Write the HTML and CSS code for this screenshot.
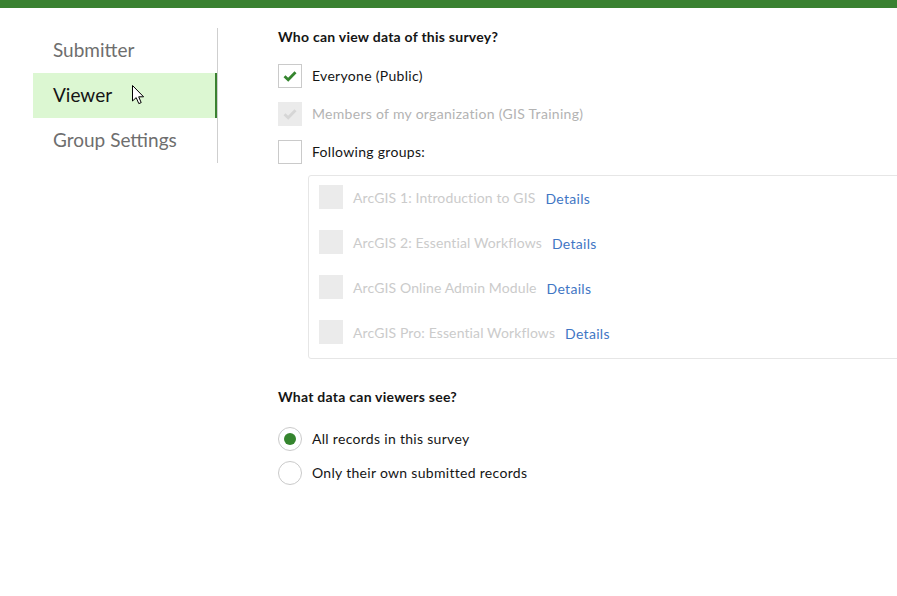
FILE: index.html
```html
<!DOCTYPE html>
<html lang="en">
<head>
<meta charset="utf-8">
<title>Survey settings - Viewer</title>
<link rel="stylesheet" href="styles.css">
</head>
<body>
<div class="topbar"></div>
<div class="layout">
  <nav class="sidenav">
    <a class="nav-item">Submitter</a>
    <a class="nav-item active">Viewer
      <svg class="cursor" width="13" height="20" viewBox="0 0 13 20"><path d="M0.5 0.5 L0.5 16 L4.2 12.6 L6.8 18.6 L9.2 17.6 L6.7 11.8 L11.6 11.8 Z" fill="#fff" stroke="#000" stroke-width="1" stroke-linejoin="round"/></svg>
    </a>
    <a class="nav-item">Group Settings</a>
  </nav>
  <main class="content">
    <h2 class="section-title">Who can view data of this survey?</h2>
    <div class="options">
      <label class="check-row">
        <span class="checkbox checked"><svg viewBox="0 0 16 16" width="16" height="16"><path d="M2.5 8.3 L6.2 11.8 L13.5 4.2" fill="none" stroke="#35852e" stroke-width="2.8"/></svg></span>
        <span class="label">Everyone (Public)</span>
      </label>
      <label class="check-row disabled">
        <span class="checkbox disabled-box"><svg viewBox="0 0 16 16" width="16" height="16"><path d="M2.5 8.3 L6.2 11.8 L13.5 4.2" fill="none" stroke="#d6d6d6" stroke-width="2.8"/></svg></span>
        <span class="label">Members of my organization (GIS Training)</span>
      </label>
      <label class="check-row">
        <span class="checkbox"></span>
        <span class="label">Following groups:</span>
      </label>
    </div>
    <div class="groups">
      <div class="group-row"><span class="checkbox disabled-box"></span><span class="group-name">ArcGIS 1: Introduction to GIS</span><a class="details">Details</a></div>
      <div class="group-row"><span class="checkbox disabled-box"></span><span class="group-name">ArcGIS 2: Essential Workflows</span><a class="details">Details</a></div>
      <div class="group-row"><span class="checkbox disabled-box"></span><span class="group-name">ArcGIS Online Admin Module</span><a class="details">Details</a></div>
      <div class="group-row"><span class="checkbox disabled-box"></span><span class="group-name">ArcGIS Pro: Essential Workflows</span><a class="details">Details</a></div>
    </div>
    <h2 class="section-title second">What data can viewers see?</h2>
    <div class="radios">
      <label class="check-row"><span class="radio selected"></span><span class="label">All records in this survey</span></label>
      <label class="check-row"><span class="radio"></span><span class="label">Only their own submitted records</span></label>
    </div>
  </main>
</div>
</body>
</html>
```
FILE: styles.css
```css
html, body {
  margin: 0;
  padding: 0;
  background: #fff;
  overflow: hidden;
}
body {
  font-family: "Lato", "Open Sans", sans-serif;
  color: #151515;
  width: 897px;
  height: 596px;
}
.topbar {
  height: 8px;
  background: #3a8131;
}
.layout {
  display: flex;
  padding-top: 20px;
}
.sidenav {
  margin-left: 33px;
  width: 184px;
  border-right: 1px solid #cfcfcf;
  display: flex;
  flex-direction: column;
  align-self: flex-start;
}
.nav-item {
  position: relative;
  box-sizing: border-box;
  display: flex;
  align-items: center;
  height: 45px;
  padding-left: 20px;
  padding-bottom: 3px;
  font-size: 19px;
  color: #6e6e6e;
  cursor: pointer;
}
.nav-item.active {
  background: #dcf7d2;
  color: #151515;
  box-shadow: inset -2px 0 0 #3a8131;
}
.cursor {
  position: absolute;
  left: 99px;
  top: 12px;
}
.content {
  margin-left: 60px;
  flex: 1;
  min-width: 0;
}
.section-title {
  margin: 0;
  font-size: 14px;
  letter-spacing: 0.25px;
  line-height: 18px;
  font-weight: 700;
  color: #151515;
}
.options {
  margin-top: 18px;
  display: flex;
  flex-direction: column;
  gap: 14px;
}
.check-row {
  display: flex;
  align-items: center;
  gap: 10px;
  height: 24px;
  font-size: 14px;
  letter-spacing: 0.3px;
}
.check-row .label {
  position: relative;
  top: -1px;
}
.checkbox {
  box-sizing: border-box;
  width: 24px;
  height: 24px;
  border: 1px solid #cacaca;
  background: #fff;
  display: flex;
  align-items: center;
  justify-content: center;
  flex: none;
}
.checkbox.disabled-box {
  border-color: #ebebeb;
  background: #ebebeb;
}
.check-row.disabled .label {
  color: #b3b3b3;
}
.groups {
  margin-top: 11px;
  margin-left: 30px;
  width: 620px;
  border: 1px solid #e6e6e6;
  border-radius: 3px;
  padding: 9px 10px 14px;
  display: flex;
  flex-direction: column;
  gap: 21px;
}
.group-row {
  display: flex;
  align-items: center;
  height: 24px;
  font-size: 14px;
  letter-spacing: 0.12px;
}
.group-name {
  margin-left: 10px;
  color: #cbcbcb;
}
.details {
  margin-left: 10px;
  color: #3f76c4;
  letter-spacing: 0.3px;
  position: relative;
  top: 1px;
  cursor: pointer;
}
.section-title.second {
  margin-top: 29px;
}
.radios {
  margin-top: 21px;
  display: flex;
  flex-direction: column;
  gap: 10px;
}
.radio {
  box-sizing: border-box;
  width: 24px;
  height: 24px;
  border: 1px solid #cacaca;
  border-radius: 50%;
  display: flex;
  align-items: center;
  justify-content: center;
  flex: none;
}
.radio.selected::after {
  content: "";
  width: 12px;
  height: 12px;
  border-radius: 50%;
  background: #35852e;
}
```
